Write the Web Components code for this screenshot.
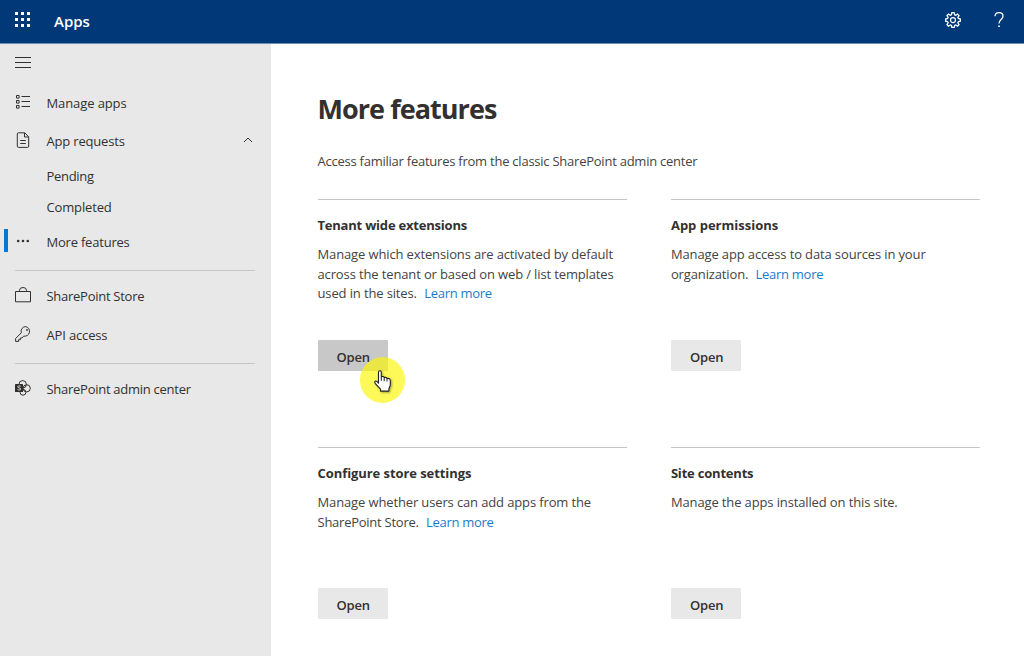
<!DOCTYPE html>
<html lang="en">
<head>
<meta charset="utf-8">
<title>Apps - More features</title>
<style>
  html, body {
    margin: 0;
    height: 100%;
    overflow: hidden;
  }
  body {
    --theme-dark: #003878;
    --link: #1b7bcb;
    --text: #323130;
    --text-soft: #444342;
    --surface-nav: #e8e8e8;
    --line: #c6c6c6;
    font-family: "Open Sans", "Noto Sans", sans-serif;
    font-size: 13px;
    color: var(--text);
    background: #fff;
  }
</style>
</head>
<body>
<admin-shell>
  <suite-header slot="header">Apps</suite-header>

  <side-nav slot="nav">
    <nav-item icon="list" style="--tracking: -0.1px">Manage apps</nav-item>
    <nav-item icon="page" style="--tracking: -0.18px" expanded>App requests</nav-item>
    <nav-item sub style="--tracking: -0.3px">Pending</nav-item>
    <nav-item sub>Completed</nav-item>
    <nav-item icon="more" style="--tracking: -0.21px" selected>More features</nav-item>
    <nav-divider></nav-divider>
    <nav-item icon="bag" style="--tracking: -0.27px">SharePoint Store</nav-item>
    <nav-item icon="key">API access</nav-item>
    <nav-divider></nav-divider>
    <nav-item icon="sharepoint" style="--tracking: -0.27px">SharePoint admin center</nav-item>
  </side-nav>

  <page-title>More features<span slot="intro">Access familiar features from the classic SharePoint admin center</span></page-title>
  <feature-grid>
    <feature-card heading="Tenant wide extensions" link="Learn more" style="--tracking: -0.21px" hovered>Manage which extensions are activated by default<br>across the tenant or based on web / list templates<br>used in the sites.</feature-card>
    <feature-card heading="App permissions" link="Learn more" style="--tracking: 0">Manage app access to data sources in your<br>organization.</feature-card>
    <feature-card heading="Configure store settings" link="Learn more" style="--tracking: -0.07px">Manage whether users can add apps from the<br><span style="letter-spacing: -0.25px">SharePoint Store.</span></feature-card>
    <feature-card heading="Site contents" style="--tracking: -0.2px">Manage the apps installed on this site.</feature-card>
  </feature-grid>
</admin-shell>

<script>
const ICONS = {
  waffle: `<g fill="currentColor" stroke="none"><path d="M0 0h3v3H0zM6 0h3v3H6zM12 0h3v3h-3zM0 6h3v3H0zM6 6h3v3H6zM12 6h3v3h-3zM0 12h3v3H0zM6 12h3v3H6zM12 12h3v3h-3z"/></g>`,
  menu: `<path d="M0 3.5h16M0 8.5h16M0 13.5h16"/>`,
  gear: `<path stroke-width="1.3" d="M6.9.7h2.2l.5 2 1.1.5 1.8-1.1L14 3.600l-1.100 1.800.5 1.100 2 .5v2.200l-2 .5-.5 1.100 1.100 1.800-1.500 1.500-1.800-1.100-1.100.5-.5 2H6.900l-.5-2-1.100-.5-1.800 1.100L2 12.600l1.100-1.800-.5-1.100-2-.5V7l2-.5.5-1.100L2 3.600l1.500-1.500 1.800 1.100 1.100-.5z"/><circle cx="8" cy="8.100" r="2.500" stroke-width="1.2"/>`,
  help: `<path stroke-width="1.3" d="M4 4.300C4.100 2 5.700.7 8 .7s4 1.300 4 3.500c0 3.200-4 3.600-4 7.300"/><path d="M7.200 13.400h1.700v1.700H7.200z" fill="currentColor" stroke="none"/>`,
  list: `<path d="M1.500 1.500h2.600v2.600H1.500zM1.500 6.500h2.600v2.600H1.500zM1.500 11.500h2.600v2.600H1.500zM6.500 2.500H15M6.500 7.500H15M6.500 12.500H15"/>`,
  page: `<path d="M3.500.8h6.300l3.900 4v9.400q0 1.200-1.200 1.200h-9q-1.200 0-1.200-1.200V2q0-1.200 1.200-1.200zM9.500 1v4h4M5.200 8.500h5.600M5.200 11.500h5.600"/>`,
  more: `<g fill="currentColor" stroke="none"><circle cx="3.200" cy="8" r="1.300"/><circle cx="8" cy="8" r="1.300"/><circle cx="12.800" cy="8" r="1.300"/></g>`,
  bag: `<path d="M.5 4.500h15v10.300H.5zM4.500 4.500V3.300q0-2.800 3.500-2.800t3.500 2.800v1.200"/>`,
  key: `<path d="M10.700.6a4.700 4.700 0 0 0-4.400 6.200L.6 12.500v2.900h3v-1.700h1.700V12H7l1.700-1.900A4.800 4.800 0 1 0 10.700.6z"/><circle cx="12" cy="4" r=".9" fill="currentColor" stroke="none"/>`,
  sharepoint: `<circle cx="7.700" cy="4.300" r="3.700"/><circle cx="11.700" cy="8.300" r="3.600"/><circle cx="8" cy="12.300" r="2.900"/><rect x="0" y="4" width="8" height="8" rx=".6" fill="currentColor" stroke="none"/><path d="M5.600 6.200q-2.600-.9-2.800.5c0 1.600 2.800.9 2.800 2.300 0 1.300-2 1.200-3 .6" stroke="#e8e8e8"/>`,
  chevron: `<path d="M4 10l4-4 4 4"/>`
};

const icon = (name) =>
  `<svg class="icon" viewBox="0 0 16 16" width="16" height="16" fill="none" stroke="currentColor" stroke-width="1" aria-hidden="true">${ICONS[name]}</svg>`;

class AdminShell extends HTMLElement {
  constructor() {
    super();
    this.attachShadow({ mode: 'open' }).innerHTML = `
      <style>
        :host {
          display: grid;
          grid-template: 43px 1fr / 271px 1fr;
          height: 100vh;
        }
        .header { grid-column: 1 / -1; }
        main { padding: 47px 43.700px 0 46.500px; }
      </style>
      <div class="header"><slot name="header"></slot></div>
      <slot name="nav"></slot>
      <main><slot></slot></main>
    `;
  }
}

class SuiteHeader extends HTMLElement {
  constructor() {
    super();
    this.attachShadow({ mode: 'open' }).innerHTML = `
      <style>
        :host {
          position: relative;
          display: flex;
          align-items: center;
          box-sizing: border-box;
          height: 43px;
          padding: 0 17.500px 3px 15px;
          background: var(--theme-dark);
          box-shadow: 0 1px 0 #6c8db3;
          color: #fff;
        }
        .icon { display: block; }
        .title {
          margin: 1px auto 0 23px;
          font-size: 15px;
          font-weight: 600;
          line-height: 20px;
        }
        .tools { display: flex; gap: 30px; }
      </style>
      ${icon('waffle')}
      <span class="title"><slot></slot></span>
      <div class="tools">${icon('gear')}${icon('help')}</div>
    `;
  }
}

class SideNav extends HTMLElement {
  constructor() {
    super();
    this.attachShadow({ mode: 'open' }).innerHTML = `
      <style>
        :host {
          display: block;
          background: var(--surface-nav);
        }
        .toggle {
          display: flex;
          align-items: center;
          box-sizing: border-box;
          height: 40.500px;
          padding: 0 15px 2.500px;
        }
      </style>
      <div class="toggle">${icon('menu')}</div>
      <slot></slot>
    `;
  }
}

class NavItem extends HTMLElement {
  constructor() {
    super();
    this.attachShadow({ mode: 'open' });
  }

  connectedCallback() {
    const name = this.getAttribute('icon');
    this.shadowRoot.innerHTML = `
      <style>
        :host {
          display: flex;
          align-items: center;
          box-sizing: border-box;
          height: 38.600px;
          padding: 0 15px 0 4px;
          color: var(--text);
        }
        :host([sub]) { height: 31px; }
        .bar {
          width: 4px;
          height: 23px;
          margin: 0 7px 2px 0;
        }
        :host([selected]) .bar { background: #0078d7; }
        .slot-icon {
          width: 16px;
          height: 16px;
          margin: 0 15.500px 2px 0;
        }
        .icon { display: block; }
        .label {
          flex: 1;
          line-height: 20px;
          letter-spacing: var(--tracking, -0.15px);
          white-space: nowrap;
        }
        .label + .icon { margin-bottom: 2px; }
      </style>
      <span class="bar"></span>
      <span class="slot-icon">${name ? icon(name) : ''}</span>
      <span class="label"><slot></slot></span>
      ${this.hasAttribute('expanded') ? icon('chevron') : ''}
    `;
  }
}

class NavDivider extends HTMLElement {
  constructor() {
    super();
    this.attachShadow({ mode: 'open' }).innerHTML = `
      <style>
        :host {
          display: block;
          height: 1px;
          margin: 8.700px 16px 5.800px 15px;
          background: var(--line);
        }
      </style>
    `;
  }
}

class PageTitle extends HTMLElement {
  constructor() {
    super();
    this.attachShadow({ mode: 'open' }).innerHTML = `
      <style>
        :host { display: block; }
        h1 {
          margin: 0;
          font-size: 27px;
          font-weight: 700;
          line-height: 38px;
          letter-spacing: -0.95px;
        }
        p {
          margin: 23px 0 28px;
          line-height: 20px;
          letter-spacing: -0.24px;
          color: var(--text-soft);
          white-space: nowrap;
        }
      </style>
      <h1><slot></slot></h1>
      <p><slot name="intro"></slot></p>
    `;
  }
}

class FeatureGrid extends HTMLElement {
  constructor() {
    super();
    this.attachShadow({ mode: 'open' }).innerHTML = `
      <style>
        :host {
          display: grid;
          grid-template: 248px auto / 1fr 1fr;
          column-gap: 44px;
        }
      </style>
      <slot></slot>
    `;
  }
}

class FeatureCard extends HTMLElement {
  constructor() {
    super();
    this.attachShadow({ mode: 'open' });
  }

  connectedCallback() {
    const heading = this.getAttribute('heading');
    const link = this.getAttribute('link');
    this.shadowRoot.innerHTML = `
      <style>
        :host {
          display: block;
          border-top: 1px solid var(--line);
        }
        h2 {
          margin: 15px 0 10.300px;
          font-size: 13px;
          font-weight: 700;
          line-height: 20px;
          letter-spacing: var(--tracking);
        }
        p {
          margin: 0;
          height: 95.100px;
          line-height: 19.300px;
          letter-spacing: -0.13px;
          color: var(--text-soft);
          white-space: nowrap;
        }
        a {
          margin-left: 4px;
          letter-spacing: -0.28px;
          color: var(--link);
          text-decoration: none;
        }
        .action { position: relative; width: 70.500px; }
        button {
          display: block;
          width: 100%;
          height: 31px;
          padding: 2px 0 0 1px;
          border: 0;
          border-radius: 1px;
          background: #e8e8e8;
          color: var(--text);
          font: 600 13px/20px "Open Sans", "Noto Sans", sans-serif;
          letter-spacing: -0.15px;
        }
        :host([hovered]) button { background: #c8c8c8; }
      </style>
      <h2>${heading}</h2>
      <p><slot></slot>${link ? ` <a>${link}</a>` : ''}</p>
      <div class="action">
        <button>Open</button>
        ${this.hasAttribute('hovered') ? '<click-pointer></click-pointer>' : ''}
      </div>
    `;
  }
}

// Hand cursor on a yellow highlight, laid over the hovered button
class ClickPointer extends HTMLElement {
  constructor() {
    super();
    this.attachShadow({ mode: 'open' }).innerHTML = `
      <style>
        :host {
          position: absolute;
          left: 42px;
          top: 17px;
          width: 45.500px;
          height: 46px;
          border-radius: 50%;
          background: #faf600a6;
        }
        svg {
          position: absolute;
          left: 14.500px;
          top: 13px;
          filter: drop-shadow(1px 1px 1px #0005);
        }
      </style>
      <svg width="18" height="23" viewBox="0 0 18 23">
        <path d="M4.500 12V2.200Q4.500.8 5.900.8t1.400 1.400v4.600q2.600-.9 2.900.8 2.400-.7 2.800.9 3.300-.6 3.300 2v4.800l-1.400 3.500v2.300H6.500v-1.900L1.400 13.600Q0 11.500 1.700 11q1.100-.2 2.800 2.200z" fill="#fff" stroke="#222" stroke-width="1.100" stroke-linejoin="round"/>
        <path d="M7.300 6.800v4M10.200 7.600v3.600M13 8.500v3" stroke="#222" stroke-width="1"/>
      </svg>
    `;
  }
}

customElements.define('admin-shell', AdminShell);
customElements.define('suite-header', SuiteHeader);
customElements.define('side-nav', SideNav);
customElements.define('nav-item', NavItem);
customElements.define('nav-divider', NavDivider);
customElements.define('page-title', PageTitle);
customElements.define('feature-grid', FeatureGrid);
customElements.define('feature-card', FeatureCard);
customElements.define('click-pointer', ClickPointer);
</script>
</body>
</html>
